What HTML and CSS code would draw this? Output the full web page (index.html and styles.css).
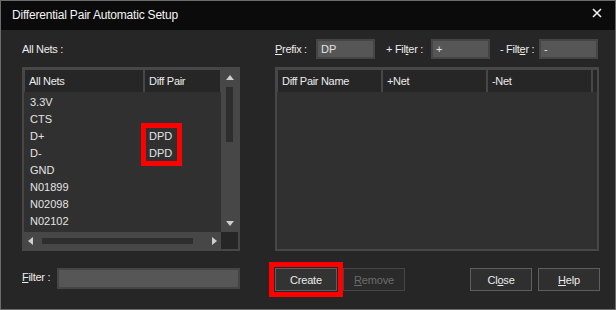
FILE: index.html
```html
<!DOCTYPE html>
<html>
<head>
<meta charset="utf-8">
<link rel="stylesheet" href="styles.css">
</head>
<body>
<div class="window">
  <div class="titlebar">
    <span class="title">Differential Pair Automatic Setup</span>
    <svg class="close-x" width="10" height="10" viewBox="0 0 10 10"><path d="M1 1 L9 9 M9 1 L1 9" stroke="#f0f0f0" stroke-width="1.6" fill="none"/></svg>
  </div>
  <div class="content">
    <div class="label top-label">All Nets :</div>
    <div class="filters">
      <span class="label">Prefix :</span>
      <div class="input"><span class="u-first">DP</span></div>
      <span class="label pad11">+ Fil<u>t</u>er :</span>
      <div class="input">+</div>
      <span class="label pad10">- Filt<u>e</u>r :</span>
      <div class="input">-</div>
    </div>

    <div class="list left-list">
      <div class="list-main">
        <div class="header">
          <div class="hcell w118">All Nets</div>
          <div class="hcell w76">Diff Pair</div>
        </div>
        <div class="rows">
          <div class="row"><span class="c1">3.3V</span><span class="c2"></span></div>
          <div class="row"><span class="c1">CTS</span><span class="c2"></span></div>
          <div class="row"><span class="c1">D+</span><span class="c2">DPD</span></div>
          <div class="row"><span class="c1">D-</span><span class="c2">DPD</span></div>
          <div class="row"><span class="c1">GND</span><span class="c2"></span></div>
          <div class="row"><span class="c1">N01899</span><span class="c2"></span></div>
          <div class="row"><span class="c1">N02098</span><span class="c2"></span></div>
          <div class="row"><span class="c1">N02102</span><span class="c2"></span></div>
        </div>
      </div>
      <div class="vscroll">
        <div class="arrow-box"><i class="tri up"></i></div>
        <div class="vthumb"></div>
        <div class="spacer"></div>
        <div class="arrow-box"><i class="tri down"></i></div>
      </div>
      <div class="hscroll">
        <div class="arrow-box"><i class="tri left"></i></div>
        <div class="hthumb"></div>
        <div class="spacer"></div>
        <div class="arrow-box"><i class="tri right"></i></div>
      </div>
      <div class="corner"></div>
      <div class="mark dpd-mark"></div>
    </div>

    <div class="list right-list">
      <div class="header">
        <div class="hcell w103">Diff Pair Name</div>
        <div class="hcell w103">+Net</div>
        <div class="hcell w103">-Net</div>
        <div class="hcell w4"></div>
      </div>
      <div class="rows"></div>
    </div>

    <div class="filter-row">
      <span class="label"><u>F</u>ilter :</span>
      <div class="input wide"></div>
    </div>
    <div class="buttons">
      <button class="btn create">Create</button>
      <button class="btn disabled"><u>R</u>emove</button>
      <div class="spacer"></div>
      <button class="btn">Cl<u>o</u>se</button>
      <button class="btn"><u>H</u>elp</button>
    </div>
  </div>
</div>
</body>
</html>
```

FILE: styles.css
```css
* { box-sizing: border-box; }
html, body { margin: 0; padding: 0; background: #262626; }
body {
  font-family: "Liberation Sans", Arial, sans-serif;
  font-size: 11px;
  color: #e6e6e6;
}
.window {
  width: 616px;
  height: 310px;
  border: 1px solid #6c6c6c;
  background: #262626;
  display: flex;
  flex-direction: column;
}
.titlebar {
  height: 29px;
  background: #0b0b0b;
  display: flex;
  align-items: center;
  padding-left: 11px;
  padding-right: 13px;
  flex-shrink: 0;
}
.title {
  font-size: 12px;
  letter-spacing: -0.2px;
  color: #f4f4f4;
  flex: 1;
  padding-bottom: 1px;
}
.close-x { margin-top: -5px; }

.content {
  display: grid;
  grid-template-columns: 218px 325px;
  grid-template-rows: 20px 184px 23px;
  column-gap: 35px;
  row-gap: 8px;
  padding: 9px 0 0 21px;
}
.label { letter-spacing: -0.3px; color: #ececec; white-space: nowrap; }
.top-label { align-self: center; }

.filters {
  display: grid;
  grid-template-columns: 41px 59px 56px 59px 49px 59px;
  align-items: center;
}
.pad11 { padding-left: 11px; }
.pad10 { padding-left: 10px; }
.filters .label:first-child::first-letter { text-decoration: underline; }

.input {
  height: 20px;
  background: #565656;
  border: 2px solid #454545;
  padding-left: 3px;
  line-height: 16px;
  color: #e4e4e4;
}

.list {
  position: relative;
  border: 2px solid #474747;
  background: #474747;
}
.left-list {
  display: grid;
  grid-template-columns: 197px 17px;
  grid-template-rows: 163px 17px;
}
.list-main { display: flex; flex-direction: column; }
.header {
  height: 23px;
  background: #474747;
  padding: 1px 0 0 1px;
  display: flex;
  column-gap: 2px;
  flex-shrink: 0;
}
.hcell {
  background: #262626;
  height: 22px;
  line-height: 22px;
  padding-left: 4px;
  letter-spacing: -0.3px;
  color: #ececec;
  white-space: nowrap;
}
.w118 { width: 118px; }
.w76 { width: 75px; }
.w103 { width: 103px; }
.w4 { width: 4px; }
.rows {
  flex: 1;
  background: #303030;
  padding-top: 2px;
}
.row {
  height: 17px;
  line-height: 17px;
  display: flex;
  color: #e4e4e4;
}
.c1 { width: 120px; padding-left: 6px; }
.c2 { padding-left: 5px; }

.vscroll { display: flex; flex-direction: column; background: #474747; }
.hscroll { display: flex; align-items: center; background: #474747; }
.arrow-box {
  width: 17px; height: 17px;
  display: flex; align-items: center; justify-content: center;
  flex-shrink: 0;
}
.spacer { flex: 1; }
.vthumb { margin: 1px 0 0 5px; width: 7px; height: 55px; background: #2e2e2e; }
.hthumb { margin-left: 1px; width: 151px; height: 6px; background: #2e2e2e; }
.corner { background: #262626; }
.tri { display: block; width: 0; height: 0; }
.tri.up { border-left: 4.5px solid transparent; border-right: 4.5px solid transparent; border-bottom: 5px solid #cfcfcf; margin-top: -1px; }
.tri.down { border-left: 4.5px solid transparent; border-right: 4.5px solid transparent; border-top: 5px solid #cfcfcf; margin-top: -1px; }
.tri.left { border-top: 4px solid transparent; border-bottom: 4px solid transparent; border-right: 5px solid #cfcfcf; margin-left: -5px; }
.tri.right { border-top: 4px solid transparent; border-bottom: 4px solid transparent; border-left: 5px solid #cfcfcf; margin-left: 3px; }

.mark {
  position: absolute;
  border: 5px solid #ff0000;
}
.dpd-mark { left: 117px; top: 54px; width: 41px; height: 43px; }

.right-list { display: flex; flex-direction: column; width: 324px; }

.filter-row {
  display: flex;
  align-items: flex-start;
  margin-top: 9px;
}
.filter-row .label { width: 35px; padding-top: 3px; }
.input.wide { width: 183px; height: 21px; }

.buttons {
  display: flex;
  column-gap: 6px;
  margin-top: 9px;
}
.btn {
  width: 62px;
  height: 23px;
  background: #2f2f2f;
  border: 1px solid #5e5e5e;
  color: #ececec;
  font-family: "Liberation Sans", Arial, sans-serif;
  font-size: 11px;
  letter-spacing: -0.2px;
  padding: 0;
}
.btn.disabled { color: #6c6c6c; border-color: #454545; background: #2a2a2a; }
.btn.create { outline: 5px solid #ff0000; outline-offset: 1px; background: #333; }
u { text-decoration: underline; }
```
